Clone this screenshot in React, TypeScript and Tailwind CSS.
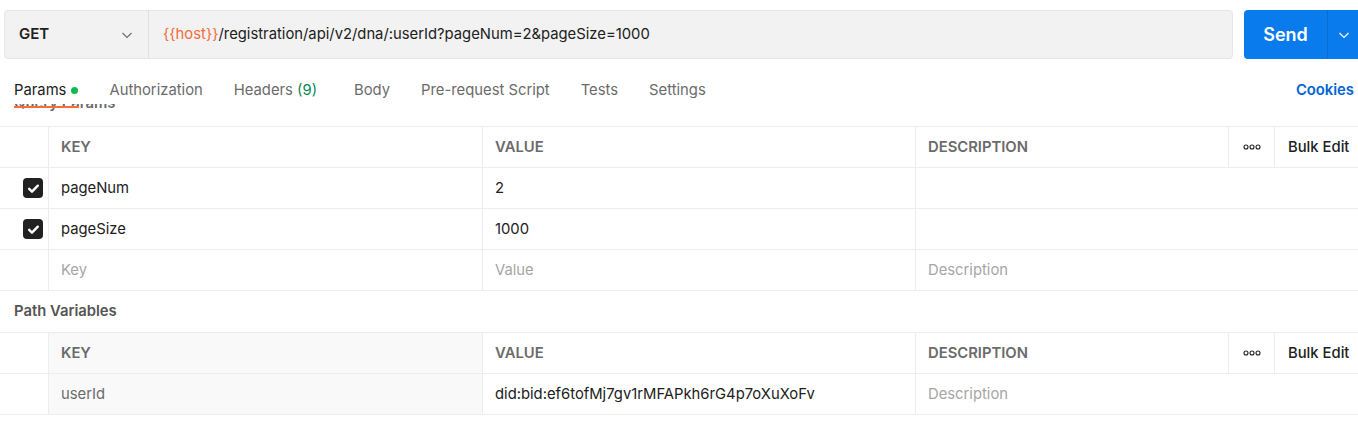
import React from "react";

const ChevronDown = ({ className = "" }: { className?: string }) => (
  <svg viewBox="0 0 12 12" className={className} fill="none" stroke="currentColor" strokeWidth="1.1">
    <path d="M1.5 4l4.5 4.5L10.5 4" />
  </svg>
);

const Check = () => (
  <div className="w-[20px] h-[20px] rounded-[4px] bg-[#212121] flex items-center justify-center">
    <svg viewBox="0 0 12 12" className="w-[13px] h-[13px]" fill="none" stroke="white" strokeWidth="2.2" strokeLinecap="round" strokeLinejoin="round">
      <path d="M2 6.3l2.6 2.6L10 3.4" />
    </svg>
  </div>
);

const Dots = () => (
  <svg viewBox="0 0 18 6" className="w-[18px] h-[6px]" fill="none" stroke="#212121" strokeWidth="1.1">
    <circle cx="3" cy="3" r="2" />
    <circle cx="9" cy="3" r="2" />
    <circle cx="15" cy="3" r="2" />
  </svg>
);

const tabs = ["Authorization", "Headers", "Body", "Pre-request Script", "Tests", "Settings"];

const HeaderRow = ({ keyShaded = false }: { keyShaded?: boolean }) => (
  <div className="grid grid-cols-[49px_434px_433px_1fr] h-[41px] border-t border-[#ededed]">
    <div className="border-r border-[#ededed]" />
    <div className={`flex items-center pl-[12px] border-r border-[#ededed] font-semibold text-[#6b6b6b] ${keyShaded ? "bg-[#f9f9f9]" : ""}`}>
      KEY
    </div>
    <div className="flex items-center pl-[12px] border-r border-[#ededed] font-semibold text-[#6b6b6b]">
      VALUE
    </div>
    <div className="flex">
      <div className="w-[313px] flex items-center pl-[12px] border-r border-[#ededed] font-semibold text-[#6b6b6b]">
        DESCRIPTION
      </div>
      <div className="w-[46px] flex items-center justify-center border-r border-[#ededed]">
        <Dots />
      </div>
      <div className="flex-1 flex items-center pl-[13px] font-medium text-[#212121]">Bulk Edit</div>
    </div>
  </div>
);

type Row = { checked?: boolean; k: string; v: string; d: string; placeholder?: boolean; shaded?: boolean };

const BodyRow = ({ row }: { row: Row }) => (
  <div className="grid grid-cols-[49px_434px_433px_1fr] h-[41px] border-t border-[#ededed]">
    <div className="flex items-center pl-[23px] border-r border-[#ededed]">{row.checked && <Check />}</div>
    <div
      className={`flex items-center pl-[12px] border-r border-[#ededed] ${
        row.placeholder ? "text-[#a6a6a6]" : row.shaded ? "text-[#6b6b6b] bg-[#f9f9f9]" : "text-[#212121]"
      }`}
    >
      {row.k}
    </div>
    <div className={`flex items-center pl-[12px] border-r border-[#ededed] ${row.placeholder ? "text-[#a6a6a6]" : "text-[#212121]"}`}>
      {row.v}
    </div>
    <div className="flex items-center pl-[12px] text-[#a6a6a6]">{row.d}</div>
  </div>
);

export default function App() {
  return (
    <div className="w-[1358px] h-[428px] overflow-hidden bg-white font-['Inter',sans-serif] text-[14.8px]">
      {/* request bar */}
      <div className="flex pt-[10px] pl-[4px] gap-[11px] h-[59px]">
        <div className="flex-1 flex border border-[#e6e6e6] bg-[#f2f2f2] rounded-[4px]">
          <div className="w-[144px] flex items-center justify-between pl-[14px] pr-[15px] border-r border-[#e0e0e0]">
            <span className="font-semibold text-[15px] text-[#212121]">GET</span>
            <ChevronDown className="w-[12px] h-[12px] text-[#6b6b6b]" />
          </div>
          <div className="flex items-center pl-[14px] text-[#212121]">
            <span className="text-[#f26b3a]">{"{{host}}"}</span>
            <span>/registration/api/v2/dna/:userId?pageNum=2&amp;pageSize=1000</span>
          </div>
        </div>
        <div className="w-[114px] flex bg-[#097bed] rounded-l-[4px] text-white">
          <div className="w-[84px] flex items-center justify-center font-semibold text-[18px] border-r border-[#0a6bd0]">
            Send
          </div>
          <div className="flex-1 flex items-center justify-center pl-[2px]">
            <ChevronDown className="w-[12px] h-[12px]" />
          </div>
        </div>
      </div>

      {/* tabs */}
      <div className="relative flex items-center justify-between h-[45px] pl-[14px] pr-[4px] pt-[17px]">
        <div className="flex items-center gap-[31px] text-[#6b6b6b]">
          <div className="relative flex items-center gap-[5px] text-[#212121]">
            <span>Params</span>
            <span className="w-[7px] h-[7px] rounded-full bg-[#0cbb52]" />
            <span className="absolute left-0 -bottom-[7px] w-[65px] h-[2px] bg-[#ff6c37] z-10" />
          </div>
          {tabs.map((t) => (
            <span key={t} className={t === "Body" ? "ml-[6px]" : ""}>
              {t === "Headers" ? (
                <>
                  Headers <span className="text-[#0a8754]">(9)</span>
                </>
              ) : (
                t
              )}
            </span>
          ))}
        </div>
        <span className="font-semibold text-[#0265d2]">Cookies</span>
      </div>

      {/* clipped section title */}
      <div className="h-[9px] overflow-hidden pl-[14px]">
        <div className="-mt-[11px] leading-[20px] font-semibold text-[#6b6b6b]">Query Params</div>
      </div>

      <div className="h-[13px]" />

      {/* query params */}
      <div className="border-b border-[#ededed]">
        <HeaderRow />
        {[
          { checked: true, k: "pageNum", v: "2", d: "" },
          { checked: true, k: "pageSize", v: "1000", d: "" },
          { k: "Key", v: "Value", d: "Description", placeholder: true },
        ].map((r) => (
          <BodyRow key={r.k} row={r} />
        ))}
      </div>

      <div className="h-[41px] flex items-center pl-[14px] font-semibold text-[#555555]">Path Variables</div>

      {/* path variables */}
      <div className="border-b border-[#ededed]">
        <HeaderRow keyShaded />
        <BodyRow row={{ k: "userId", v: "did:bid:ef6tofMj7gv1rMFAPkh6rG4p7oXuXoFv", d: "Description", shaded: true }} />
      </div>
    </div>
  );
}
